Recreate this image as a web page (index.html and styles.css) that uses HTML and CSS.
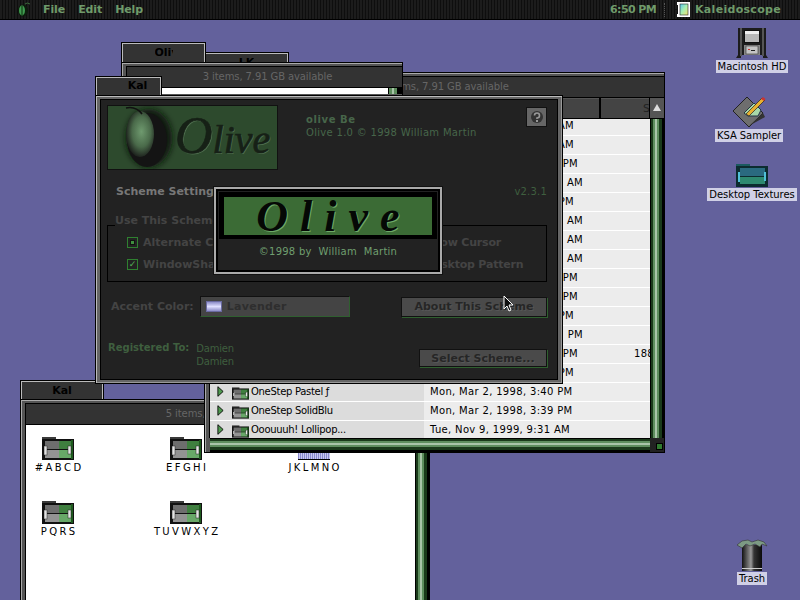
FILE: index.html
```html
<!DOCTYPE html>
<html lang="en">
<head>
    <meta charset="UTF-8">
    <title>Kaleidoscope Olive scheme</title>
    <link rel="stylesheet" href="styles.css">
</head>
<body>
    <svg class="defs" width="0" height="0">
        <symbol id="folder" viewBox="0 0 32 23">
            <rect x="0" y="0" width="14" height="4" fill="#3a3a3a"/>
            <rect x="0" y="2" width="32" height="21" fill="#111"/>
            <rect x="3" y="4" width="14" height="8" fill="#6e6e6e"/>
            <rect x="17" y="4" width="12" height="8" fill="#3f7f3f"/>
            <rect x="3" y="13" width="14" height="8" fill="#939393"/>
            <rect x="17" y="13" width="12" height="8" fill="#68a868"/>
            <rect x="29" y="3" width="2" height="19" fill="#1e5a1e"/>
            <rect x="2" y="9" width="3" height="9" fill="#e4e4e4" stroke="#222" stroke-width=".5"/>
            <rect x="26" y="9" width="3" height="8" fill="#e4e4e4" stroke="#222" stroke-width=".5"/>
        </symbol>
        <symbol id="arrow" viewBox="0 0 8 12">
            <path d="M1 0.5 L7 6 L1 11.5 Z" fill="#4f9a4f" stroke="#000" stroke-width="1"/>
        </symbol>
    </svg>

    <div class="desktop">
        <div class="menubar">
            <svg class="apple" width="14" height="15" viewBox="0 0 14 15">
                <path d="M8 2 Q10 0 13 2" fill="none" stroke="#3a6a3a"/>
                <ellipse cx="6" cy="8.5" rx="5" ry="6" fill="#0c1c0c"/>
                <ellipse cx="5" cy="8.5" rx="3" ry="5" fill="#3f9a4f"/>
                <path d="M5 4 V13" stroke="#0c2c0c"/>
            </svg>
            <span class="menu">File</span>
            <span class="menu">Edit</span>
            <span class="menu">Help</span>
            <span class="menu clock">6:50 PM</span>
            <span class="divider"></span>
            <svg class="app-icon" width="16" height="15" viewBox="0 0 16 15">
                <defs>
                    <linearGradient id="rainbow" x1="0" y1="0" x2="1" y2="1">
                        <stop offset="0" stop-color="#58c8f0"/>
                        <stop offset=".5" stop-color="#a8f0b0"/>
                        <stop offset="1" stop-color="#f0e070"/>
                    </linearGradient>
                </defs>
                <rect x="2" y="0" width="13" height="15" fill="#fff"/>
                <rect x="5" y="2" width="8" height="11" fill="url(#rainbow)" stroke="#222" stroke-width=".6"/>
                <path d="M0 7.5 H3 M2.5 3 V12" stroke="#111"/>
            </svg>
            <span class="menu app-name">Kaleidoscope</span>
        </div>

        <!-- desktop icons -->
        <div class="disk disk-hd">
            <svg width="32" height="31" viewBox="0 0 32 31">
                <path d="M2 0 H30 V27 L32 30 H27 V27 H5 V30 H0 L2 27 Z" fill="#1c1c1c"/>
                <rect x="4" y="0" width="2" height="28" fill="#555"/>
                <rect x="26" y="0" width="2" height="28" fill="#555"/>
                <rect x="8" y="2" width="16" height="13" fill="#111"/>
                <rect x="9" y="3" width="14" height="11" fill="#b8b8b8"/>
                <rect x="9" y="3" width="14" height="3" fill="#eee"/>
                <rect x="8" y="17" width="16" height="10" fill="#888"/>
                <rect x="10" y="18" width="12" height="8" fill="#c4c4c4" stroke="#333" stroke-width=".6"/>
                <rect x="12" y="21" width="2" height="1" fill="#c33"/>
                <rect x="15" y="22" width="4" height="1" fill="#222"/>
            </svg>
            <span class="disk-label">Macintosh HD</span>
        </div>
        <div class="disk disk-ksa">
            <svg width="34" height="32" viewBox="0 0 34 32">
                <path d="M1 15 L15 1 L31 17 L17 31 Z" fill="#6e6e6e" stroke="#222"/>
                <path d="M15 31 L33 21 L31 17 L17 30 Z" fill="#333"/>
                <path d="M12 17 L22 7 L29 14 L26 20 L16 20 Z" fill="#a8d8a8" stroke="#234"/>
                <path d="M14 18 L30 2 L33 4 L17 20 Z" fill="#e8b030" stroke="#222" stroke-width=".7"/>
                <path d="M29 3 L31 1 L33.5 3 L32 5 Z" fill="#c33"/>
            </svg>
            <span class="disk-label">KSA Sampler</span>
        </div>
        <div class="disk disk-tex">
            <svg width="32" height="23" viewBox="0 0 32 23">
                <rect x="0" y="0" width="14" height="4" fill="#1a5a60"/>
                <rect x="0" y="2" width="32" height="21" fill="#0c2c30"/>
                <rect x="4" y="4" width="25" height="8" fill="#2a6a80"/>
                <rect x="4" y="13" width="25" height="7" fill="#2e8a70"/>
                <rect x="2" y="8" width="2" height="10" fill="#50c0d8"/>
                <rect x="28" y="8" width="2" height="9" fill="#50c0d8"/>
            </svg>
            <span class="disk-label">Desktop Textures</span>
        </div>
        <div class="disk disk-trash">
            <svg width="32" height="32" viewBox="0 0 32 32">
                <defs>
                    <linearGradient id="can" x1="0" y1="0" x2="1" y2="0">
                        <stop offset="0" stop-color="#111"/>
                        <stop offset=".45" stop-color="#999"/>
                        <stop offset=".6" stop-color="#333"/>
                        <stop offset="1" stop-color="#0a0a0a"/>
                    </linearGradient>
                </defs>
                <rect x="6" y="6" width="20" height="26" fill="url(#can)"/>
                <rect x="6" y="29" width="20" height="1" fill="#ccc"/>
                <path d="M1 6 L6 2 L12 1 L16 3 L22 1 L28 3 L31 7 L26 5 L24 8 L19 5 L14 7 L10 5 L6 9 Z" fill="#7c9a84" stroke="#333" stroke-width=".6"/>
            </svg>
            <span class="disk-label">Trash</span>
        </div>

        <!-- alphabet folder window, furthest back -->
        <div class="win win-alpha">
            <div class="tab tab-alpha"><span class="tab-text">Kal</span></div>
            <div class="frame frame-fill">
                <div class="info">5 items, 7.91 GB available</div>
                <div class="pane">
                    <div class="icon-grid">
                        <div class="cell">
                            <svg class="folder-big"><use href="#folder"/></svg>
                            <span># A B C D</span>
                        </div>
                        <div class="cell">
                            <svg class="folder-big"><use href="#folder"/></svg>
                            <span>E F G H I</span>
                        </div>
                        <div class="cell">
                            <div class="folder-picked"></div>
                            <span>J K L M N O</span>
                        </div>
                        <div class="cell">
                            <svg class="folder-big"><use href="#folder"/></svg>
                            <span>P Q R S</span>
                        </div>
                        <div class="cell">
                            <svg class="folder-big"><use href="#folder"/></svg>
                            <span>T U V W X Y Z</span>
                        </div>
                    </div>
                    <div class="vscroll"></div>
                </div>
            </div>
        </div>

        <!-- list window -->
        <div class="win win-list">
            <div class="tab tab-list"><span class="tab-text">LK</span></div>
            <div class="frame frame-fill">
                <div class="info info-list">3 items, 7.91 GB available</div>
                <div class="col-heads">
                    <div class="col-head col-name"></div>
                    <div class="col-head col-size">S</div>
                    <div class="sort-btn"></div>
                </div>
                <div class="pane">
                    <div class="rows">
                        <div class="row"><span class="tail end-a">AM</span></div>
                        <div class="row"><span class="tail end-a">AM</span></div>
                        <div class="row"><span class="tail end-b">PM</span></div>
                        <div class="row"><span class="tail end-c">: AM</span></div>
                        <div class="row"><span class="tail end-a">PM</span></div>
                        <div class="row"><span class="tail end-c">AM</span></div>
                        <div class="row"><span class="tail end-c">AM</span></div>
                        <div class="row"><span class="tail end-c">AM</span></div>
                        <div class="row"><span class="tail end-b">PM</span></div>
                        <div class="row"><span class="tail end-b">PM</span></div>
                        <div class="row"><span class="tail end-a">PM</span></div>
                        <div class="row"><span class="tail end-c">PM</span></div>
                        <div class="row"><span class="tail end-b">PM</span><span class="size">188</span></div>
                        <div class="row"><span class="tail end-a">PM</span></div>
                        <div class="row">
                            <div class="name">
                                <svg class="disclose"><use href="#arrow"/></svg>
                                <svg class="folder-small"><use href="#folder"/></svg>
                                <span>OneStep Pastel ƒ</span>
                            </div>
                            <span class="date">Mon, Mar 2, 1998, 3:40 PM</span>
                        </div>
                        <div class="row">
                            <div class="name">
                                <svg class="disclose"><use href="#arrow"/></svg>
                                <svg class="folder-small"><use href="#folder"/></svg>
                                <span>OneStep SolidBlu</span>
                            </div>
                            <span class="date">Mon, Mar 2, 1998, 3:39 PM</span>
                        </div>
                        <div class="row">
                            <div class="name">
                                <svg class="disclose"><use href="#arrow"/></svg>
                                <svg class="folder-small"><use href="#folder"/></svg>
                                <span>Ooouuuh! Lollipop...</span>
                            </div>
                            <span class="date">Tue, Nov 9, 1999, 9:31 AM</span>
                        </div>
                    </div>
                    <div class="vscroll"></div>
                </div>
                <div class="hbar">
                    <div class="hscroll"></div>
                    <div class="grow-box"></div>
                </div>
            </div>
        </div>

        <!-- olive folder window -->
        <div class="win win-olive">
            <div class="tab tab-olive"><span class="tab-text">Oliv</span></div>
            <div class="frame frame-fill">
                <div class="info">3 items, 7.91 GB available</div>
                <div class="strip">
                    <div class="strip-white"></div>
                    <div class="strip-scroll"></div>
                </div>
            </div>
        </div>

        <!-- control panel dialog -->
        <div class="win win-dialog">
            <div class="tab tab-dialog"><span class="tab-text">Kal</span></div>
            <div class="frame frame-dialog">
                <div class="dialog">
                    <div class="dlg-top">
                        <svg class="logo" width="171" height="65" viewBox="0 0 171 65">
                            <defs>
                                <radialGradient id="fruit" cx=".55" cy=".45" r=".6">
                                    <stop offset="0" stop-color="#6f9a6f"/>
                                    <stop offset=".55" stop-color="#4a6a4a"/>
                                    <stop offset="1" stop-color="#151515"/>
                                </radialGradient>
                                <filter id="soft" x="-30%" y="-30%" width="160%" height="160%">
                                    <feGaussianBlur stdDeviation="3"/>
                                </filter>
                            </defs>
                            <rect x=".5" y=".5" width="170" height="64" fill="#2d4a2d" stroke="#111"/>
                            <ellipse cx="42" cy="33" rx="23" ry="29" fill="#0e130e" filter="url(#soft)"/>
                            <ellipse cx="40" cy="35" rx="20" ry="27" fill="#141414"/>
                            <ellipse cx="33" cy="29" rx="14" ry="23" fill="url(#fruit)"/>
                            <path d="M19 3 Q29 1 35 9" fill="none" stroke="#111" stroke-width="1.5"/>
                            <text class="logo-shadow" x="69" y="49"><tspan class="logo-cap">O</tspan>live</text>
                            <text class="logo-text" x="68" y="48"><tspan class="logo-cap">O</tspan>live</text>
                        </svg>
                        <div class="dlg-about">
                            <div class="about-name">olive Be</div>
                            <div>Olive 1.0 © 1998 William Martin</div>
                        </div>
                        <div class="help-btn">
                            <svg width="14" height="14" viewBox="0 0 14 14">
                                <circle cx="7" cy="7" r="6" fill="#333"/>
                                <path d="M4.5 5.5 A2.5 2.5 0 1 1 7 8 V9" fill="none" stroke="#999" stroke-width="1.6"/>
                                <rect x="6" y="10" width="2" height="2" fill="#999"/>
                            </svg>
                        </div>
                    </div>
                    <div class="dlg-heading">
                        <span class="settings">Scheme Settings:</span>
                        <span class="version">v2.3.1</span>
                    </div>
                    <div class="group">
                        <div class="group-title">Use This Scheme</div>
                        <div class="check-row">
                            <div class="check"><span class="box box-mixed"></span>Alternate Cursor</div>
                            <div class="check check-right">Show Cursor</div>
                        </div>
                        <div class="check-row">
                            <div class="check"><span class="box box-on">✓</span>WindowShade</div>
                            <div class="check check-right">Desktop Pattern</div>
                        </div>
                    </div>
                    <div class="accent-row">
                        <span class="accent-label">Accent Color:</span>
                        <div class="popup"><span class="swatch"></span>Lavender</div>
                        <div class="btn btn-about">About This Scheme</div>
                    </div>
                    <div class="reg-row">
                        <span class="reg-label">Registered To:</span>
                        <div class="reg-names">
                            <div>Damien</div>
                            <div>Damien</div>
                        </div>
                        <div class="btn btn-select">Select Scheme...</div>
                    </div>
                </div>
            </div>
        </div>

        <!-- splash over the dialog -->
        <div class="splash">
            <div class="splash-logo"><span>Olive</span></div>
            <div class="splash-credit">©1998 by&nbsp; William&nbsp; Martin</div>
        </div>

        <svg class="cursor" width="12" height="18" viewBox="0 0 12 18">
            <path d="M1 1 V14 L4 11 L6 16 L8 15 L6 10 H10 Z" fill="#111" stroke="#fff"/>
        </svg>
    </div>
</body>
</html>
```
FILE: styles.css
```css
/* Mac OS 8 desktop with the Olive scheme */
* {
    box-sizing: border-box;
}

body {
    margin: 0;
    font-family: "DejaVu Sans", sans-serif;
    font-size: 10px;
}

.defs {
    position: absolute;
}

.desktop {
    position: relative;
    width: 800px;
    height: 600px;
    overflow: hidden;
    background: #63619c;
}

/* menu bar */
.menubar {
    display: flex;
    align-items: center;
    height: 20px;
    padding-left: 17px;
    background: repeating-linear-gradient(90deg, #1c1c1c 0 2px, #0e0e0e 2px 3px);
    border-bottom: 1px solid #000;
    color: #6f9a6a;
}

.menu {
    font-size: 11px;
    font-weight: bold;
    margin-left: 13px;
    letter-spacing: -.1px;
}

.apple + .menu {
    margin-left: 12px;
}

.clock {
    margin-left: auto;
    letter-spacing: -.6px;
}

.divider {
    width: 1px;
    height: 14px;
    margin: 0 10px 0 8px;
    border-left: 1px dotted #555;
}

.app-icon {
    flex: none;
}

.app-name {
    margin: 0 19px 0 4px;
    letter-spacing: .3px;
}

/* desktop icons */
.disk {
    position: absolute;
    display: flex;
    flex-direction: column;
    align-items: center;
    width: 100px;
}

.disk-hd { left: 702px; top: 28px; }
.disk-ksa { left: 699px; top: 96px; }
.disk-tex { left: 702px; top: 164px; }
.disk-trash { left: 702px; top: 539px; }

.disk-label {
    margin-top: 1px;
    padding: 0 2px;
    background: #d0d0e6;
    color: #000;
    line-height: 13px;
    white-space: nowrap;
    letter-spacing: -.05px;
}

/* windows */
.win {
    position: absolute;
    display: flex;
    flex-direction: column;
    align-items: flex-start;
}

.win-alpha { left: 20px; top: 380px; width: 410px; height: 240px; }
.win-list { left: 204px; top: 52px; width: 461px; height: 401px; }
.win-olive { left: 121px; top: 42px; width: 282px; height: 160px; }
.win-dialog { left: 95px; top: 76px; width: 468px; height: 308px; }

.tab {
    display: flex;
    justify-content: center;
    align-items: center;
    height: 20px;
    flex: none;
    background: #333;
    border: 1px solid #000;
    border-bottom: 0;
    box-shadow: inset 1px 1px 0 #bbb, inset -1px 0 0 #bbb;
    color: #000;
    font-size: 11px;
    font-weight: bold;
}

.tab-alpha { width: 84px; height: 19px; }
.tab-list { width: 85px; }
.tab-olive { width: 85px; }
.tab-dialog { width: 67px; height: 19px; padding: 0 0 1px 18px; }

.tab-text {
    overflow: hidden;
    white-space: nowrap;
}

.tab-olive .tab-text {
    width: 18px;
}

.frame {
    display: flex;
    flex-direction: column;
    width: 100%;
    flex: 1;
    min-height: 0;
    padding: 3px 0 0 4px;
    background: #555;
    border: 1px solid #000;
    box-shadow: inset 1px 1px 0 #aaa;
}

.info {
    flex: none;
    height: 22px;
    padding-left: 6px;
    background: #333;
    border: 1px solid #000;
    border-right: 0;
    color: #666;
    font-size: 10px;
    line-height: 20px;
    letter-spacing: -.1px;
    text-align: center;
}

.info-list {
    padding-left: 14px;
}

.pane {
    display: flex;
    flex: 1;
    min-height: 0;
    background: #fff;
    border-left: 1px solid #000;
}

.vscroll {
    flex: none;
    width: 14px;
    background: linear-gradient(90deg, #000 0 1px, #1a3a1a 1px 3px, #5e8e5e 3px 5px, #a8c4a8 5px 7px, #5e8e5e 7px 9px, #1a3a1a 9px 12px, #000 12px);
}

/* alphabet window contents */
.icon-grid {
    flex: 1;
    display: grid;
    grid-template-columns: repeat(3, 64px);
    grid-auto-rows: 64px;
    column-gap: 64px;
    padding-top: 12px;
    align-content: start;
}

.cell {
    display: flex;
    flex-direction: column;
    align-items: center;
    font-size: 10px;
    color: #000;
    white-space: nowrap;
}

.cell span {
    margin-top: 1px;
    line-height: 13px;
    word-spacing: -.8px;
}

.folder-big {
    flex: none;
    width: 32px;
    height: 23px;
}

.folder-picked {
    flex: none;
    width: 32px;
    height: 23px;
    background: repeating-linear-gradient(90deg, #8888cc 0 1px, #c8c8f0 1px 2px) bottom / 100% 7px no-repeat;
    border-bottom: 1px solid #000;
}

/* list window contents */
.col-heads {
    display: flex;
    flex: none;
    height: 21px;
    background: #000;
}

.col-head {
    height: 20px;
    background: #444;
    border-top: 1px solid #555;
    color: #222;
    font-size: 11px;
    line-height: 19px;
}

.col-name {
    flex: 1;
    margin-right: 2px;
}

.col-size {
    width: 48px;
    overflow: hidden;
    padding-left: 42px;
    margin-right: 1px;
}

.sort-btn {
    width: 14px;
    height: 20px;
    background: #555;
    position: relative;
}

.sort-btn::after {
    content: "";
    position: absolute;
    left: 3px;
    top: 6px;
    border-left: 4px solid transparent;
    border-right: 4px solid transparent;
    border-bottom: 7px solid #ddd;
}

.rows {
    flex: 1;
    min-width: 0;
    overflow: hidden;
    background: #ececec;
}

.row {
    position: relative;
    display: flex;
    align-items: center;
    height: 19px;
    padding-bottom: 1px;
    border-bottom: 1px solid #fff;
    color: #000;
    white-space: nowrap;
}

.row:first-child {
    margin-top: -2px;
}

.name {
    display: flex;
    align-items: center;
    width: 214px;
    height: 18px;
    flex: none;
    padding-left: 7px;
    background: #dcdcdc;
    letter-spacing: -.3px;
}

.disclose {
    width: 7px;
    height: 11px;
    flex: none;
}

.folder-small {
    width: 17px;
    height: 13px;
    margin: 3px 2px 0 8px;
    flex: none;
}

.date {
    margin-left: 6px;
    letter-spacing: .33px;
}

.tail {
    text-align: right;
    letter-spacing: .3px;
}

.end-a { width: 364px; }
.end-b { width: 368px; }
.end-c { width: 373px; }

.size {
    position: absolute;
    left: 424px;
    letter-spacing: .3px;
}

.hbar {
    display: flex;
    flex: none;
    height: 14px;
    margin-left: 1px;
}

.hscroll {
    flex: 1;
    background: linear-gradient(180deg, #000 0 1px, #1a3a1a 1px 3px, #5e8e5e 3px 5px, #a8c4a8 5px 7px, #5e8e5e 7px 9px, #1a3a1a 9px 12px, #000 12px);
}

.grow-box {
    position: relative;
    width: 14px;
    background: #222;
}

.grow-box::after {
    content: "";
    position: absolute;
    right: 1px;
    bottom: 2px;
    width: 5px;
    height: 5px;
    background: #2f7a2f;
    border: 1px solid #000;
}

/* olive window contents */
.strip {
    display: flex;
    height: 6px;
    padding-left: 36px;
    background: #000;
}

.strip-white {
    flex: 1;
    background: #fff;
}

.strip-scroll {
    width: 14px;
    background: linear-gradient(90deg, #000 0 1px, #5e8e5e 1px 4px, #a8c4a8 4px 6px, #5e8e5e 6px 9px, #000 9px);
}

/* dialog */
.frame-dialog {
    padding: 3px 4px;
    box-shadow: inset 1px 1px 0 #bbb, inset -1px -1px 0 #999;
    background: #666;
}

.dialog {
    flex: 1;
    padding: 5px 10px 0 6px;
    background: #222;
    border: 1px solid #000;
    color: #444;
    font-size: 11px;
    font-weight: bold;
}

.dlg-top {
    display: flex;
    align-items: flex-start;
}

.logo {
    flex: none;
}

.logo-text,
.logo-shadow {
    font-family: "Liberation Serif", serif;
    font-style: italic;
    font-size: 40px;
    font-weight: normal;
}

.logo-cap {
    font-size: 52px;
}

.logo-text {
    fill: #162016;
    stroke: #162016;
    stroke-width: .7px;
}

.logo-shadow {
    fill: #4f6f4f;
}

.dlg-about {
    margin: 8px 0 0 28px;
    color: #47664a;
    font-size: 10px;
    font-weight: normal;
    line-height: 13px;
    letter-spacing: .3px;
}

.about-name {
    font-weight: bold;
    letter-spacing: .6px;
}

.help-btn {
    display: flex;
    justify-content: center;
    align-items: center;
    width: 21px;
    height: 20px;
    margin: 2px 0 0 auto;
    background: #666;
    border: 1px solid #111;
}

.dlg-heading {
    display: flex;
    justify-content: space-between;
    align-items: center;
    height: 14px;
    margin-top: 14px;
    padding-left: 9px;
}

.settings {
    color: #777;
}

.version {
    color: #3f5f3f;
    font-size: 10px;
    font-weight: normal;
    letter-spacing: .2px;
}

.group {
    height: 57px;
    margin-top: 27px;
    border: 1px solid #000;
    padding: 6px 0 0 19px;
}

.group-title {
    width: fit-content;
    margin: -18px 0 0 -12px;
    line-height: 14px;
    background: #222;
}

.check-row {
    display: grid;
    grid-template-columns: 298px auto;
    height: 22px;
    align-items: center;
}

.check {
    display: flex;
    align-items: center;
    white-space: nowrap;
}

.check-right {
    letter-spacing: -.2px;
}

.group-title + .check-row {
    margin-top: 3px;
}

.box {
    display: flex;
    justify-content: center;
    align-items: center;
    width: 11px;
    height: 11px;
    margin-right: 5px;
    border: 1px solid #2f8030;
    color: #55b055;
    font-size: 9px;
}

.box-mixed::before {
    content: "";
    width: 5px;
    height: 5px;
    background: #3f8f3f;
    box-shadow: inset 0 0 0 1px #111;
}

.accent-row,
.reg-row {
    display: flex;
    align-items: center;
}

.accent-row {
    margin-top: 14px;
    padding-left: 4px;
}

.popup {
    display: flex;
    align-items: center;
    width: 150px;
    height: 21px;
    margin-left: 6px;
    background: #444;
    border: 1px solid #111;
    border-right-color: #2f5f2f;
    border-bottom-color: #2f5f2f;
    color: #2e2e2e;
    letter-spacing: .3px;
}

.swatch {
    width: 16px;
    height: 11px;
    margin: 0 5px;
    background: linear-gradient(#8c8cc8, #e0e0ff 50%, #8c8cc8);
    border: 1px solid #6a6aa0;
}

.btn {
    display: flex;
    justify-content: center;
    align-items: center;
    margin-left: auto;
    background: #4a4a4a;
    border: 1px solid #111;
    box-shadow: 1px 1px 0 #2f5f2f;
    color: #262626;
    text-shadow: 1px 1px 0 #565656;
}

.btn-about {
    width: 146px;
    height: 20px;
}

.btn-select {
    width: 128px;
    height: 18px;
    margin-top: 9px;
}

.reg-row {
    align-items: flex-start;
    margin-top: 23px;
    padding-left: 1px;
    color: #3f5f3f;
}

.reg-label {
    margin-top: 2px;
    font-size: 10px;
}

.reg-names {
    margin: 2px 0 0 7px;
    font-size: 10px;
    font-weight: normal;
    line-height: 13px;
    letter-spacing: -.2px;
}

/* splash */
.splash {
    position: absolute;
    left: 213px;
    top: 186px;
    width: 230px;
    height: 89px;
    padding: 4px;
    background: #222;
    border: 1px solid #111;
    box-shadow: inset 0 0 0 2px #aaa, inset 0 0 0 4px #000;
}

.splash-logo {
    display: flex;
    justify-content: center;
    height: 47px;
    margin: 1px 1px 0;
    overflow: hidden;
    background: #3b6b35;
    border: 5px solid #000;
    border-bottom-width: 4px;
}

.splash-logo span {
    font-family: "Liberation Serif", serif;
    font-style: italic;
    font-weight: bold;
    font-size: 44px;
    line-height: 40px;
    letter-spacing: 12px;
    margin-right: -12px;
    color: #050805;
    text-shadow: 1px 1px 0 #6faa68;
}

.splash-credit {
    margin-top: 7px;
    color: #6f9f6f;
    font-size: 10px;
    letter-spacing: .25px;
    text-align: center;
}

.cursor {
    position: absolute;
    left: 503px;
    top: 295px;
}
```
